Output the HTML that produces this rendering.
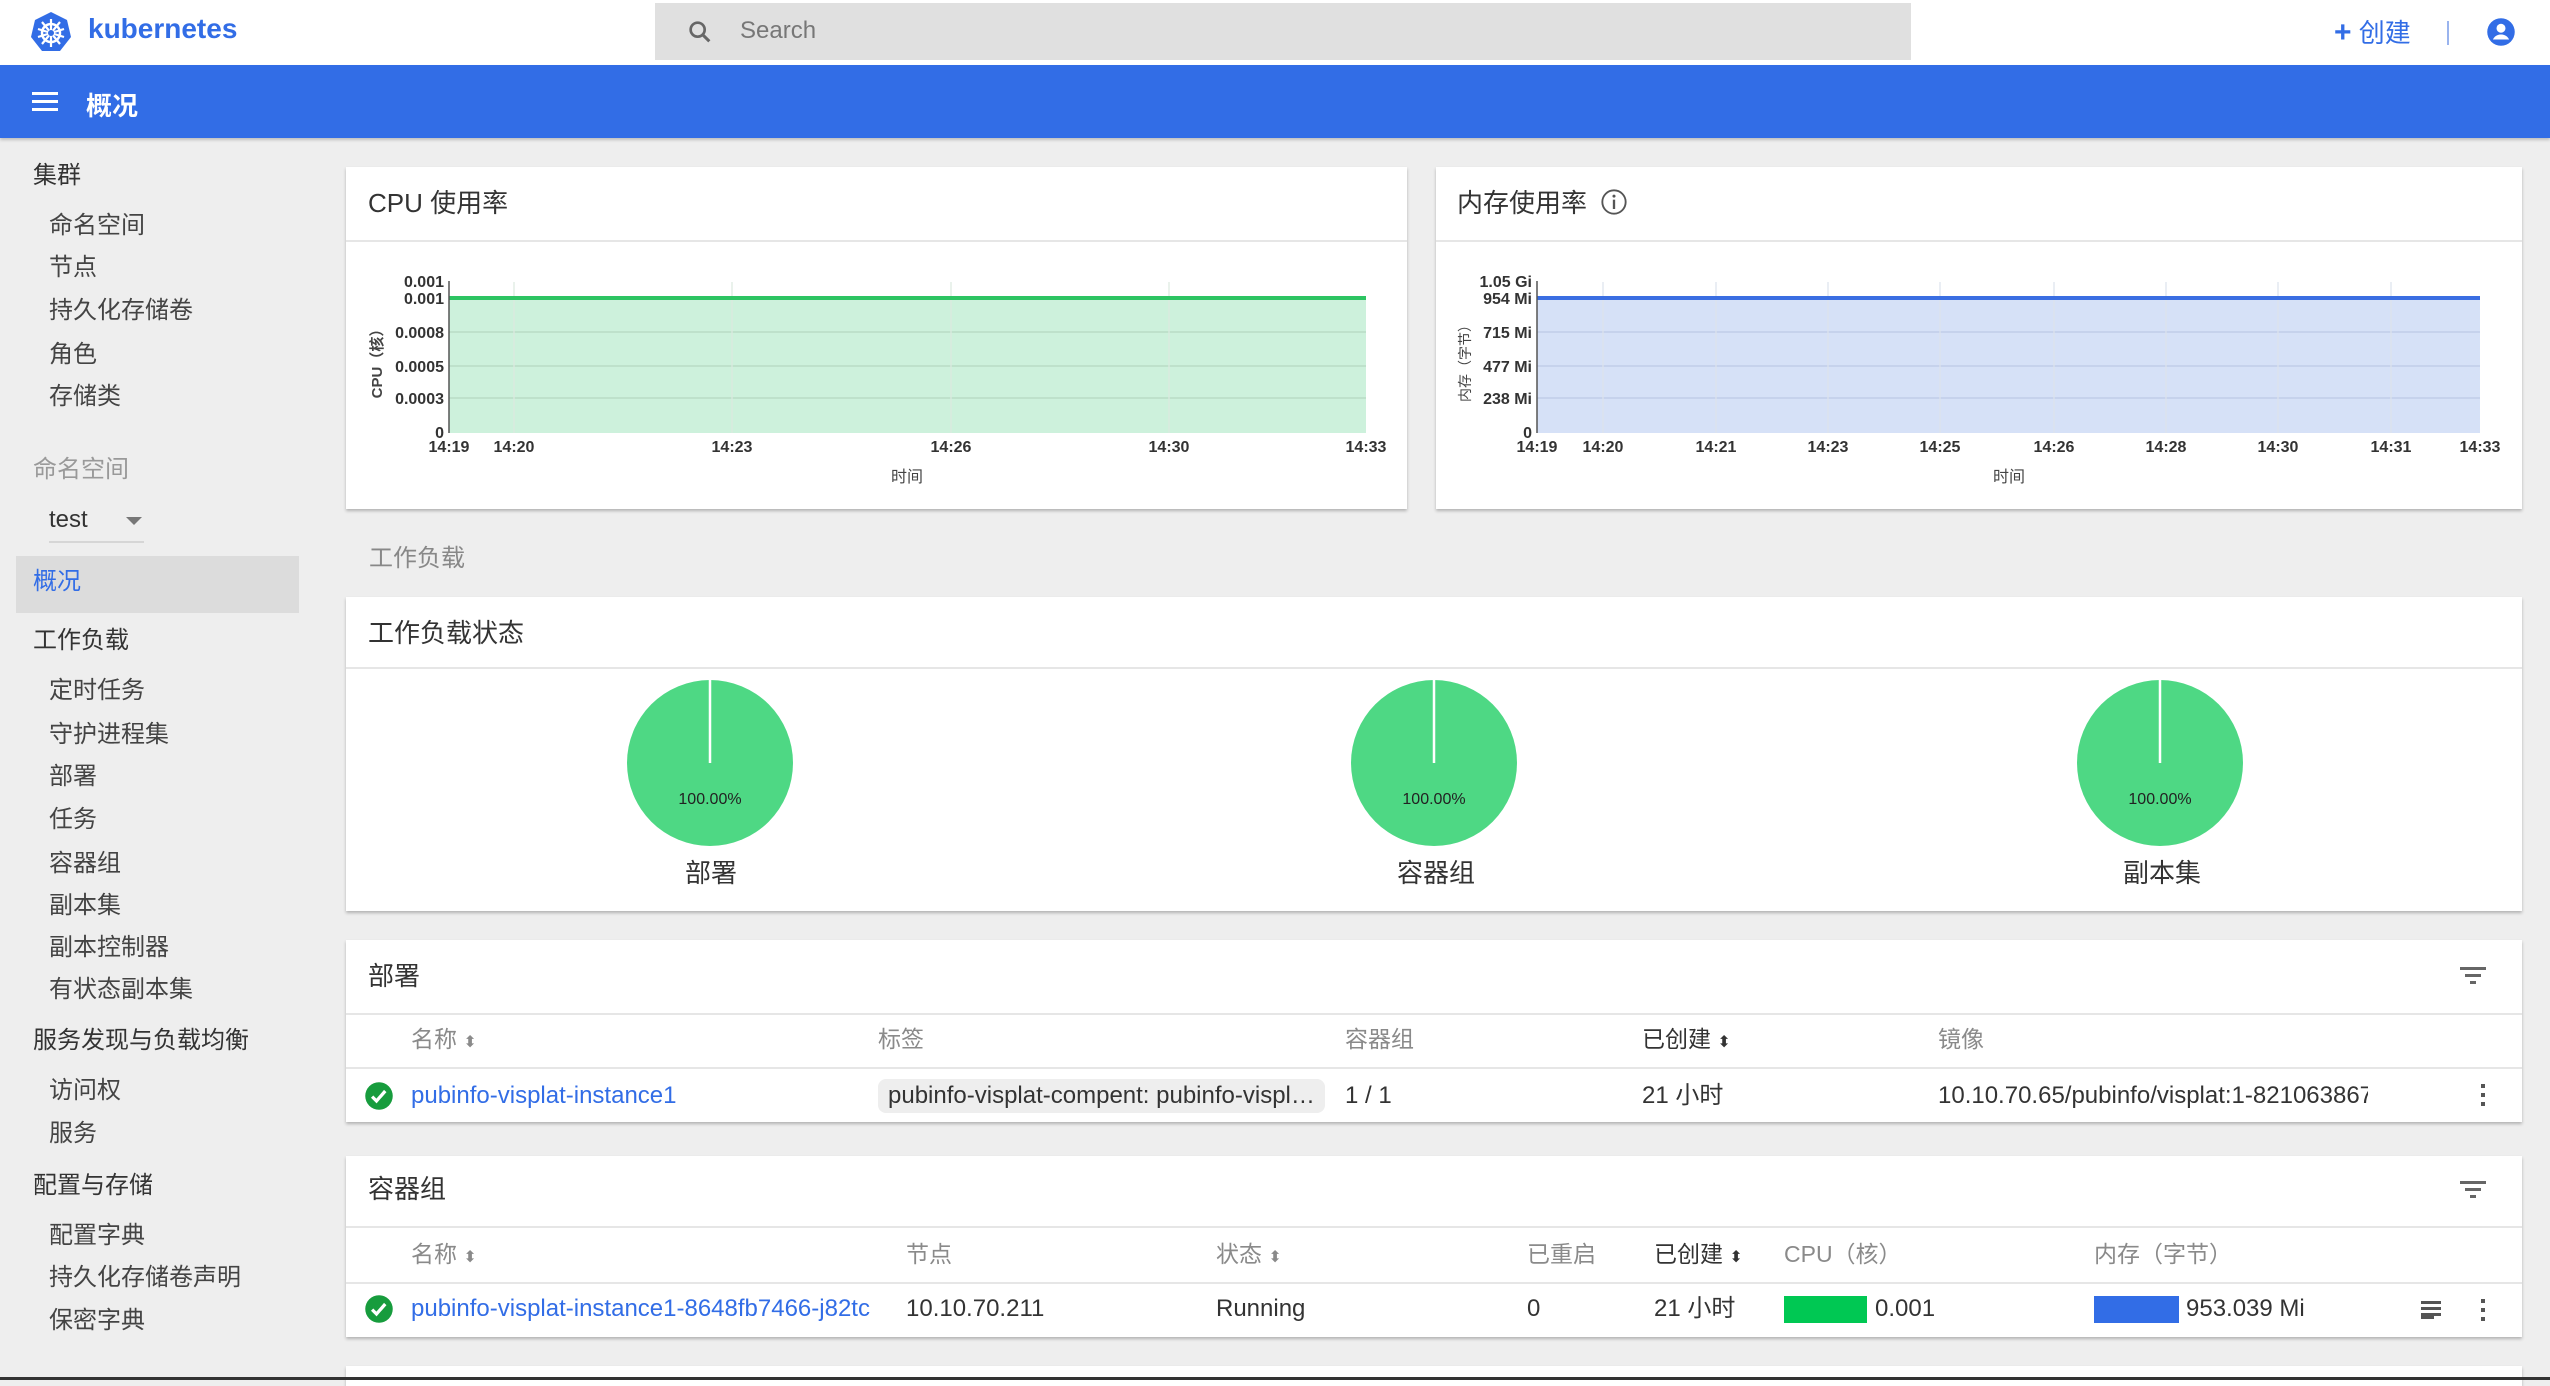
<!DOCTYPE html>
<html><head><meta charset="utf-8">
<style>
*{margin:0;padding:0;box-sizing:border-box}
body{width:2550px;height:1380px;overflow:hidden;background:#eeeeee;font-family:"Liberation Sans","Noto Sans CJK SC",sans-serif;color:#222;position:relative}
.a{position:absolute;white-space:nowrap}
.card{position:absolute;background:#fff;box-shadow:0 2px 3px rgba(0,0,0,.25)}
.hr{position:absolute;height:2px;background:#e6e6e6}
.sb{font-size:24px;color:#333;line-height:30px}
.sb2{font-size:24px;color:#444;line-height:30px}
.th{font-size:23px;color:#8a8a8a;line-height:30px}
.td{font-size:24px;color:#333;line-height:30px}
.lk{color:#326de6}
.title{font-size:26px;color:#333;line-height:32px}
</style></head><body>
<div class="a" style="left:0;top:0;width:2550px;height:65px;background:#fff"></div>
<svg class="a" style="left:29px;top:10px" width="44" height="44" viewBox="0 0 44 44">
<polygon points="22,2 38,10 42,27 31,41 13,41 2,27 6,10" fill="#326de6"/>
<circle cx="22" cy="23" r="9" fill="none" stroke="#fff" stroke-width="2.5"/>
<g stroke="#fff" stroke-width="2.2"><line x1="22" y1="9" x2="22" y2="37"/><line x1="9" y1="19" x2="35" y2="27"/><line x1="9" y1="27" x2="35" y2="19"/><line x1="13" y1="12" x2="31" y2="34"/><line x1="31" y1="12" x2="13" y2="34"/></g>
<circle cx="22" cy="23" r="3" fill="#326de6"/>
</svg>
<div class="a" style="left:88px;top:13px;font-size:28px;font-weight:bold;color:#326de6">kubernetes</div>
<div class="a" style="left:655px;top:3px;width:1256px;height:57px;background:#e0e0e0"></div>
<svg class="a" style="left:686px;top:18px" width="28" height="28" viewBox="0 0 24 24"><circle cx="10" cy="10" r="6" fill="none" stroke="#666" stroke-width="2.3"/><line x1="14.5" y1="14.5" x2="20" y2="20" stroke="#666" stroke-width="2.6"/></svg>
<div class="a" style="left:740px;top:17px;font-size:24px;color:#777">Search</div>
<div class="a" style="left:2334px;top:13px;font-size:26px;color:#326de6"><b style="font-size:30px">+</b> 创建</div>
<div class="a" style="left:2447px;top:21px;width:2px;height:24px;background:#9ab4ee"></div>
<svg class="a" style="left:2486px;top:17px" width="30" height="30" viewBox="0 0 24 24"><circle cx="12" cy="12" r="11" fill="#326de6"/><circle cx="12" cy="9" r="3.6" fill="#fff"/><path d="M5.5 18c1.5-3 4-4 6.5-4s5 1 6.5 4" fill="#fff"/></svg>
<div class="a" style="left:0;top:65px;width:2550px;height:73px;background:#326de6;box-shadow:0 2px 3px rgba(0,0,0,.2)"></div>
<div class="a" style="left:32px;top:92px;width:26px;height:3px;background:#fff;box-shadow:0 8px 0 #fff,0 16px 0 #fff"></div>
<div class="a" style="left:86px;top:86px;font-size:26px;color:#fff;font-weight:bold">概况</div>
<div class="a sb" style="left:33px;top:161px">集群</div>
<div class="a sb2" style="left:49px;top:211px">命名空间</div>
<div class="a sb2" style="left:49px;top:253px">节点</div>
<div class="a sb2" style="left:49px;top:296px">持久化存储卷</div>
<div class="a sb2" style="left:49px;top:340px">角色</div>
<div class="a sb2" style="left:49px;top:382px">存储类</div>
<div class="a sb" style="left:33px;top:455px;color:#999">命名空间</div>
<div class="a sb" style="left:49px;top:505px;color:#333">test</div>
<div class="a" style="left:126px;top:517px;border-left:8px solid transparent;border-right:8px solid transparent;border-top:8px solid #777"></div>
<div class="a" style="left:49px;top:541px;width:95px;height:2px;background:#d6d6d6"></div>
<div class="a" style="left:16px;top:556px;width:283px;height:57px;background:#dcdcdc"></div>
<div class="a sb" style="left:33px;top:567px;color:#326de6">概况</div>
<div class="a sb" style="left:33px;top:626px">工作负载</div>
<div class="a sb2" style="left:49px;top:676px">定时任务</div>
<div class="a sb2" style="left:49px;top:720px">守护进程集</div>
<div class="a sb2" style="left:49px;top:762px">部署</div>
<div class="a sb2" style="left:49px;top:805px">任务</div>
<div class="a sb2" style="left:49px;top:849px">容器组</div>
<div class="a sb2" style="left:49px;top:891px">副本集</div>
<div class="a sb2" style="left:49px;top:933px">副本控制器</div>
<div class="a sb2" style="left:49px;top:975px">有状态副本集</div>
<div class="a sb" style="left:33px;top:1026px">服务发现与负载均衡</div>
<div class="a sb2" style="left:49px;top:1076px">访问权</div>
<div class="a sb2" style="left:49px;top:1119px">服务</div>
<div class="a sb" style="left:33px;top:1171px">配置与存储</div>
<div class="a sb2" style="left:49px;top:1221px">配置字典</div>
<div class="a sb2" style="left:49px;top:1263px">持久化存储卷声明</div>
<div class="a sb2" style="left:49px;top:1306px">保密字典</div>

<div class="card" style="left:346px;top:167px;width:1061px;height:342px"></div>
<div class="hr" style="left:346px;top:240px;width:1061px"></div>
<div class="a title" style="left:368px;top:187px">CPU 使用率</div>
<div class="card" style="left:1436px;top:167px;width:1086px;height:342px"></div>
<div class="hr" style="left:1436px;top:240px;width:1086px"></div>
<div class="a title" style="left:1457px;top:187px">内存使用率</div>
<svg class="a" style="left:1600px;top:188px" width="28" height="28" viewBox="0 0 24 24"><circle cx="12" cy="12" r="10" fill="none" stroke="#555" stroke-width="1.6"/><line x1="12" y1="10" x2="12" y2="18" stroke="#555" stroke-width="2"/><circle cx="12" cy="7" r="1.3" fill="#555"/></svg>

<div class="a" style="left:369px;top:538px;font-size:24px;color:#888">工作负载</div>

<div class="card" style="left:346px;top:597px;width:2176px;height:314px"></div>
<div class="hr" style="left:346px;top:667px;width:2176px"></div>
<div class="a title" style="left:368px;top:617px">工作负载状态</div>
<div class="a title" style="left:685px;top:857px">部署</div>
<div class="a title" style="left:1397px;top:857px">容器组</div>
<div class="a title" style="left:2123px;top:857px">副本集</div>

<div class="card" style="left:346px;top:940px;width:2176px;height:182px"></div>
<div class="hr" style="left:346px;top:1013px;width:2176px"></div>
<div class="hr" style="left:346px;top:1067px;width:2176px"></div>
<div class="a title" style="left:368px;top:960px">部署</div>
<svg class="a" style="left:2458px;top:963px" width="30" height="26" viewBox="0 0 30 26"><rect x="2" y="4" width="26" height="3" fill="#666"/><rect x="7" y="11" width="16" height="3" fill="#666"/><rect x="12" y="18" width="6" height="3" fill="#666"/></svg>
<div class="a th" style="left:411px;top:1024px">名称 <span style="font-size:16px">⬍</span></div>
<div class="a th" style="left:878px;top:1024px">标签</div>
<div class="a th" style="left:1345px;top:1024px">容器组</div>
<div class="a th" style="left:1642px;top:1024px;color:#333">已创建 <span style="font-size:16px">⬍</span></div>
<div class="a th" style="left:1938px;top:1024px">镜像</div>
<svg class="a" style="left:364px;top:1081px" width="30" height="30" viewBox="0 0 24 24"><circle cx="12" cy="12" r="11" fill="#179c3d"/><path d="M6.5 12.5l3.5 3.5 7-8" fill="none" stroke="#fff" stroke-width="2.6"/></svg>
<div class="a td lk" style="left:411px;top:1081px">pubinfo-visplat-instance1</div>
<div class="a" style="left:878px;top:1079px;width:447px;height:34px;background:#eeeeee;border-radius:8px"></div>
<div class="a td" style="left:888px;top:1081px;width:430px;overflow:hidden;text-overflow:ellipsis">pubinfo-visplat-compent: pubinfo-visplat-compent</div>
<div class="a td" style="left:1345px;top:1081px">1 / 1</div>
<div class="a td" style="left:1642px;top:1081px">21 小时</div>
<div class="a td" style="left:1938px;top:1081px;width:430px;overflow:hidden">10.10.70.65/pubinfo/visplat:1-821063867</div>
<div class="a" style="left:2481px;top:1084px;width:4px;height:4px;background:#555;box-shadow:0 9px 0 #555,0 18px 0 #555"></div>

<div class="card" style="left:346px;top:1156px;width:2176px;height:181px"></div>
<div class="hr" style="left:346px;top:1226px;width:2176px"></div>
<div class="hr" style="left:346px;top:1282px;width:2176px"></div>
<div class="a title" style="left:368px;top:1173px">容器组</div>
<svg class="a" style="left:2458px;top:1177px" width="30" height="26" viewBox="0 0 30 26"><rect x="2" y="4" width="26" height="3" fill="#666"/><rect x="7" y="11" width="16" height="3" fill="#666"/><rect x="12" y="18" width="6" height="3" fill="#666"/></svg>
<div class="a th" style="left:411px;top:1239px">名称 <span style="font-size:16px">⬍</span></div>
<div class="a th" style="left:906px;top:1239px">节点</div>
<div class="a th" style="left:1216px;top:1239px">状态 <span style="font-size:16px">⬍</span></div>
<div class="a th" style="left:1527px;top:1239px">已重启</div>
<div class="a th" style="left:1654px;top:1239px;color:#333">已创建 <span style="font-size:16px">⬍</span></div>
<div class="a th" style="left:1784px;top:1239px">CPU（核）</div>
<div class="a th" style="left:2094px;top:1239px">内存（字节）</div>
<svg class="a" style="left:364px;top:1294px" width="30" height="30" viewBox="0 0 24 24"><circle cx="12" cy="12" r="11" fill="#179c3d"/><path d="M6.5 12.5l3.5 3.5 7-8" fill="none" stroke="#fff" stroke-width="2.6"/></svg>
<div class="a td lk" style="left:411px;top:1294px;width:475px;overflow:hidden">pubinfo-visplat-instance1-8648fb7466-j82tc</div>
<div class="a td" style="left:906px;top:1294px">10.10.70.211</div>
<div class="a td" style="left:1216px;top:1294px">Running</div>
<div class="a td" style="left:1527px;top:1294px">0</div>
<div class="a td" style="left:1654px;top:1294px">21 小时</div>
<div class="a" style="left:1784px;top:1296px;width:83px;height:27px;background:#00c853"></div>
<div class="a td" style="left:1875px;top:1294px">0.001</div>
<div class="a" style="left:2094px;top:1296px;width:85px;height:27px;background:#326de6"></div>
<div class="a td" style="left:2186px;top:1294px">953.039 Mi</div>
<div class="a" style="left:2421px;top:1301px;width:20px;height:3px;background:#555;box-shadow:0 6px 0 #555,0 12px 0 #555"></div>
<div class="a" style="left:2421px;top:1316px;width:13px;height:3px;background:#555"></div>
<div class="a" style="left:2481px;top:1299px;width:4px;height:4px;background:#555;box-shadow:0 9px 0 #555,0 18px 0 #555"></div>

<div class="card" style="left:346px;top:1366px;width:2176px;height:20px"></div>
<div class="a" style="left:0;top:1377px;width:2550px;height:3px;background:#333"></div>

<svg class="a" style="left:0;top:0" width="2550" height="1380" viewBox="0 0 2550 1380" font-family="Liberation Sans, Noto Sans CJK SC, sans-serif">
<rect x="449" y="298" width="917" height="135" fill="#cdf1dc"/>
<g stroke="#b9dcc5" stroke-width="1.5"><line x1="449" y1="332" x2="1366" y2="332"/><line x1="449" y1="366" x2="1366" y2="366"/><line x1="449" y1="398" x2="1366" y2="398"/></g>
<g stroke="#dde8e0" stroke-width="1.2"><line x1="514" y1="282" x2="514" y2="433"/><line x1="732" y1="282" x2="732" y2="433"/><line x1="951" y1="282" x2="951" y2="433"/><line x1="1169" y1="282" x2="1169" y2="433"/></g>
<line x1="449" y1="298" x2="1366" y2="298" stroke="#2dc462" stroke-width="4"/>
<line x1="449" y1="281" x2="449" y2="433" stroke="#555" stroke-width="1.5"/>
<g font-size="16" font-weight="bold" fill="#333" text-anchor="end">
<text x="444" y="287">0.001</text><text x="444" y="304">0.001</text><text x="444" y="338">0.0008</text><text x="444" y="372">0.0005</text><text x="444" y="404">0.0003</text><text x="444" y="438">0</text></g>
<g font-size="16" font-weight="bold" fill="#333" text-anchor="middle">
<text x="449" y="452">14:19</text><text x="514" y="452">14:20</text><text x="732" y="452">14:23</text><text x="951" y="452">14:26</text><text x="1169" y="452">14:30</text><text x="1366" y="452">14:33</text></g>
<text x="907" y="482" font-size="16" fill="#444" text-anchor="middle">时间</text>
<text transform="translate(382,360) rotate(-90)" font-size="15" fill="#444" text-anchor="middle" font-weight="bold">CPU（核）</text>
<rect x="1537" y="298" width="943" height="135" fill="#d6e1f7"/>
<g stroke="#c0cde8" stroke-width="1.5"><line x1="1537" y1="332" x2="2480" y2="332"/><line x1="1537" y1="366" x2="2480" y2="366"/><line x1="1537" y1="398" x2="2480" y2="398"/></g>
<g stroke="#dde2ec" stroke-width="1.2"><line x1="1603" y1="282" x2="1603" y2="433"/><line x1="1716" y1="282" x2="1716" y2="433"/><line x1="1828" y1="282" x2="1828" y2="433"/><line x1="1940" y1="282" x2="1940" y2="433"/><line x1="2054" y1="282" x2="2054" y2="433"/><line x1="2166" y1="282" x2="2166" y2="433"/><line x1="2278" y1="282" x2="2278" y2="433"/><line x1="2391" y1="282" x2="2391" y2="433"/></g>
<line x1="1537" y1="298" x2="2480" y2="298" stroke="#3a6ee2" stroke-width="4"/>
<line x1="1537" y1="281" x2="1537" y2="433" stroke="#555" stroke-width="1.5"/>
<g font-size="16" font-weight="bold" fill="#333" text-anchor="end">
<text x="1532" y="287">1.05 Gi</text><text x="1532" y="304">954 Mi</text><text x="1532" y="338">715 Mi</text><text x="1532" y="372">477 Mi</text><text x="1532" y="404">238 Mi</text><text x="1532" y="438">0</text></g>
<g font-size="16" font-weight="bold" fill="#333" text-anchor="middle">
<text x="1537" y="452">14:19</text><text x="1603" y="452">14:20</text><text x="1716" y="452">14:21</text><text x="1828" y="452">14:23</text><text x="1940" y="452">14:25</text><text x="2054" y="452">14:26</text><text x="2166" y="452">14:28</text><text x="2278" y="452">14:30</text><text x="2391" y="452">14:31</text><text x="2480" y="452">14:33</text></g>
<text x="2009" y="482" font-size="16" fill="#444" text-anchor="middle">时间</text>
<text transform="translate(1470,360) rotate(-90)" font-size="14" fill="#444" text-anchor="middle">内存（字节）</text>
<g fill="#4ed884"><circle cx="710" cy="763" r="83"/><circle cx="1434" cy="763" r="83"/><circle cx="2160" cy="763" r="83"/></g>
<g stroke="#fff" stroke-width="2.5"><line x1="710" y1="680" x2="710" y2="763"/><line x1="1434" y1="680" x2="1434" y2="763"/><line x1="2160" y1="680" x2="2160" y2="763"/></g>
<g font-size="16" fill="#222" text-anchor="middle"><text x="710" y="804">100.00%</text><text x="1434" y="804">100.00%</text><text x="2160" y="804">100.00%</text></g>
</svg>
</body></html>
